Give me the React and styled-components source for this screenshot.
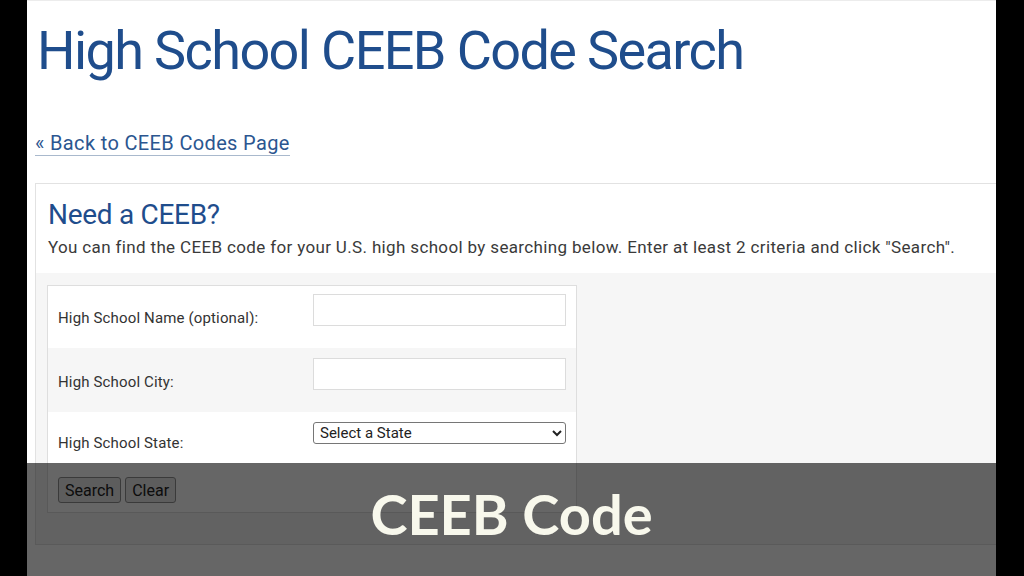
import React from 'react';
import styled, { createGlobalStyle } from 'styled-components';

const GlobalStyle = createGlobalStyle`
  html, body {
    margin: 0;
    padding: 0;
    background: #000;
  }
  body {
    font-family: Roboto, "Liberation Sans", Arial, sans-serif;
  }
`;

const Frame = styled.div`
  display: flex;
  width: 1024px;
  height: 576px;
  background: #000;
  overflow: hidden;
`;

const Page = styled.div`
  position: relative;
  width: 969px;
  height: 576px;
  margin-left: 27px;
  background: #fff;
  border-top: 1px solid #ececec;
  box-sizing: border-box;
  overflow: hidden;
  padding-left: 8px;
`;

const Title = styled.h1`
  margin: 18px 0 0 2px;
  font-size: 54px;
  line-height: 64px;
  font-weight: 400;
  color: #1f4d8c;
  letter-spacing: -1.6px;
  white-space: nowrap;
`;

const BackLink = styled.a`
  display: inline-block;
  margin-top: 49px;
  font-size: 20px;
  line-height: 22px;
  color: #2b5690;
  text-decoration: none;
  letter-spacing: 0.35px;
  border-bottom: 1px solid #a9b9cd;
  padding-bottom: 1px;
  white-space: nowrap;
`;

const Panel = styled.section`
  margin-top: 27px;
  width: 1000px;
  height: 362px;
  border: 1px solid #e2e2e2;
  box-sizing: border-box;
  display: flex;
  flex-direction: column;
`;

const Intro = styled.div`
  padding: 14px 12px 0;
  height: 89px;
  box-sizing: border-box;
`;

const Heading = styled.h2`
  margin: 0;
  font-size: 28px;
  line-height: 34px;
  font-weight: 400;
  color: #1f4d8c;
  letter-spacing: -0.3px;
`;

const Lead = styled.p`
  margin: 4px 0 0;
  font-size: 17px;
  line-height: 22px;
  color: #3a3a3a;
  letter-spacing: 0.35px;
  white-space: nowrap;
`;

const Well = styled.div`
  flex: 1;
  background: #f6f6f6;
  padding: 12px 11px;
`;

const FormBox = styled.form`
  width: 530px;
  background: #fff;
  border: 1px solid #dedede;
  box-sizing: border-box;
`;

const Row = styled.div`
  display: grid;
  grid-template-columns: 255px 253px;
  height: ${(p) => p.$h}px;
  padding: ${(p) => p.$pad}px 10px 0;
  box-sizing: border-box;
  background: ${(p) => (p.$shade ? '#f6f6f6' : '#fff')};
`;

const Label = styled.label`
  padding-top: ${(p) => p.$top}px;
  font-size: 15px;
  line-height: 18px;
  letter-spacing: 0.15px;
  color: #333;
`;

const TextInput = styled.input`
  width: 253px;
  height: 32px;
  box-sizing: border-box;
  border: 1px solid #dcdcdc;
  background: #fff;
  margin: 0;
`;

const Select = styled.select`
  width: 253px;
  height: 22px;
  box-sizing: border-box;
  border: 1px solid #767676;
  border-radius: 3px;
  background: #fff;
  font-family: Roboto, "Liberation Sans", Arial, sans-serif;
  font-size: 15px;
  color: #222;
  padding: 0 2px;
`;

const Buttons = styled.div`
  display: flex;
  gap: 4px;
  padding: 9px 10px 9px;
`;

const Button = styled.button`
  height: 26px;
  padding: 0 6px;
  border: 1px solid #929292;
  border-radius: 3px;
  background: #e8e8e8;
  font-family: Roboto, "Liberation Sans", Arial, sans-serif;
  font-size: 16px;
  color: #222;
`;

const Caption = styled.div`
  position: absolute;
  left: 0;
  right: 0;
  top: 462px;
  bottom: 0;
  background: rgba(0, 0, 0, 0.6);
  display: flex;
  justify-content: center;
  padding-top: 17px;
  box-sizing: border-box;
`;

const CaptionText = styled.span`
  font-family: Lato, "Liberation Sans", sans-serif;
  font-weight: 700;
  font-size: 56px;
  line-height: 67px;
  color: #f8f8ec;
`;

export default function App() {
  return (
    <>
      <GlobalStyle />
      <Frame>
        <Page>
          <Title>High School CEEB Code Search</Title>
          <BackLink href="#">« Back to CEEB Codes Page</BackLink>
          <Panel>
            <Intro>
              <Heading>Need a CEEB?</Heading>
              <Lead>
                You can find the CEEB code for your U.S. high school by searching below. Enter at
                least 2 criteria and click "Search".
              </Lead>
            </Intro>
            <Well>
              <FormBox onSubmit={(e) => e.preventDefault()}>
                <Row $h={62} $pad={8}>
                  <Label $top={15}>High School Name (optional):</Label>
                  <TextInput type="text" />
                </Row>
                <Row $h={64} $pad={10} $shade>
                  <Label $top={15}>High School City:</Label>
                  <TextInput type="text" />
                </Row>
                <Row $h={56} $pad={10}>
                  <Label $top={12}>High School State:</Label>
                  <Select defaultValue="">
                    <option value="">Select a State</option>
                  </Select>
                </Row>
                <Buttons>
                  <Button type="submit">Search</Button>
                  <Button type="button">Clear</Button>
                </Buttons>
              </FormBox>
            </Well>
          </Panel>
          <Caption>
            <CaptionText>CEEB Code</CaptionText>
          </Caption>
        </Page>
      </Frame>
    </>
  );
}
